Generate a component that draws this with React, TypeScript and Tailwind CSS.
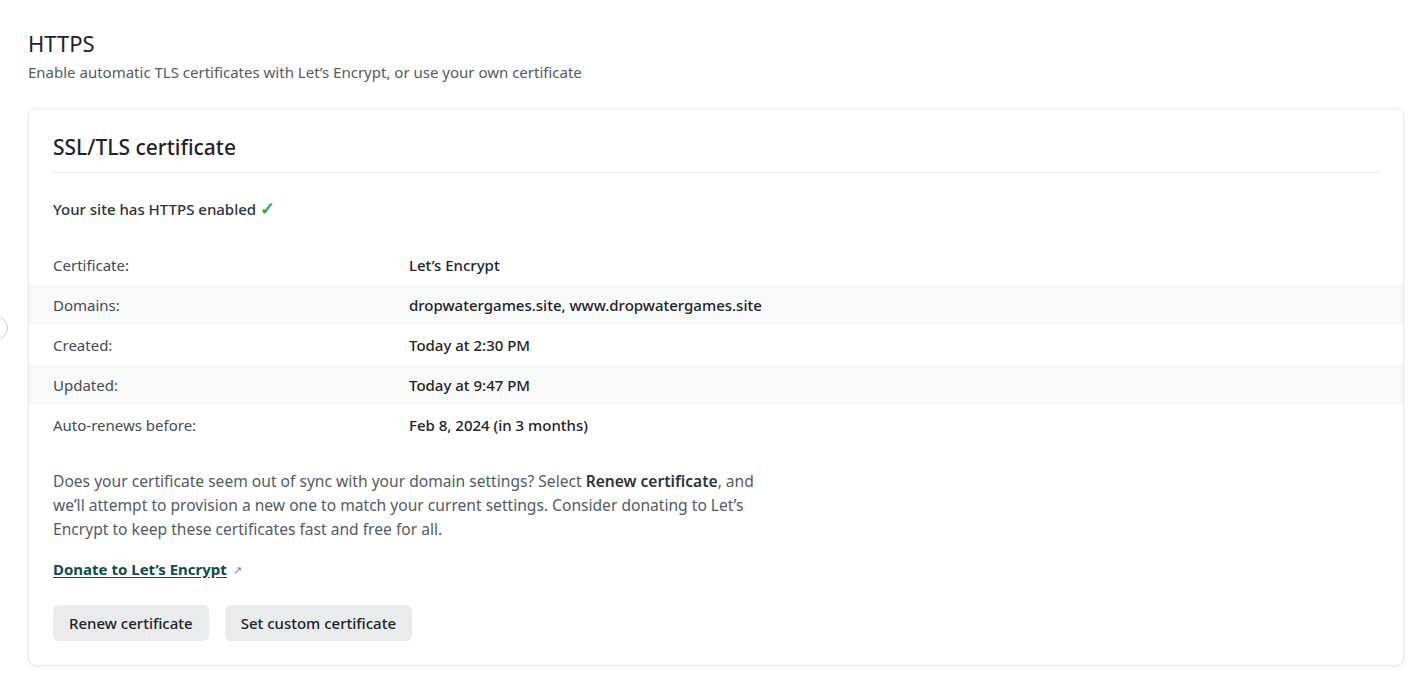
import { ReactNode } from "react";

const rows: { label: string; value: string }[] = [
  { label: "Certificate:", value: "Let’s Encrypt" },
  { label: "Domains:", value: "dropwatergames.site, www.dropwatergames.site" },
  { label: "Created:", value: "Today at 2:30 PM" },
  { label: "Updated:", value: "Today at 9:47 PM" },
  { label: "Auto-renews before:", value: "Feb 8, 2024 (in 3 months)" },
];

const Button = ({ children }: { children: ReactNode }) => (
  <button className="h-9 px-4 rounded-md bg-[#e9ebed] text-[15px] font-medium text-[#1f2328] hover:bg-[#dfe2e5]">
    {children}
  </button>
);

const App = () => {
  return (
    <div
      className="relative min-h-screen bg-white pl-[28px] pr-[14px] pt-[29px] text-[#2e3338]"
      style={{ fontFamily: '"Noto Sans", "Open Sans", sans-serif' }}
    >
      {/* collapsed sidebar toggle peeking from the left */}
      <div className="absolute left-[-16px] top-[316px] w-6 h-6 rounded-full border border-[#c9ccd0] bg-white" />

      <h1 className="text-[22px] leading-7 text-[#1f2328]">HTTPS</h1>
      <p className="mt-[5px] text-[15px] leading-5 text-[#545a61]">
        Enable automatic TLS certificates with Let’s Encrypt, or use your own certificate
      </p>

      <div className="mt-[26px] rounded-lg border border-[#e7e9eb] bg-white shadow-[0_1px_4px_rgba(0,0,0,0.06)]">
        <div className="px-6 pt-6">
          <h2 className="pb-[11px] border-b border-[#e4e6e8] text-[21px] leading-7 font-medium text-[#1f2328]">
            SSL/TLS certificate
          </h2>
          <p className="mt-6 text-[15px] leading-6 font-medium text-[#2e3338]">
            Your site has HTTPS enabled <span className="text-[18px] font-bold leading-none text-[#30a46c]">✓</span>
          </p>
        </div>

        <div className="mt-6">
          {rows.map((r, i) => (
            <div
              key={r.label}
              className={`flex items-center h-10 px-6 text-[15px] ${i % 2 === 1 ? "bg-[#f8f9f9]" : ""}`}
            >
              <div className="w-[356px] text-[#454b52]">{r.label}</div>
              <div className="font-medium text-[#1f2328]">{r.value}</div>
            </div>
          ))}
        </div>

        <div className="px-6 pt-6 pb-6">
          <p className="max-w-[712px] text-[15.6px] leading-6 text-[#545a61]">
            Does your certificate seem out of sync with your domain settings? Select{" "}
            <strong className="font-semibold text-[#2e3338]">Renew certificate</strong>, and we’ll attempt to
            provision a new one to match your current settings. Consider donating to Let’s Encrypt to keep these
            certificates fast and free for all.
          </p>
          <div className="mt-4 h-6 flex items-center">
            <a href="#" className="text-[15px] leading-6 font-bold text-[#0a4d4a] underline underline-offset-2">
              Donate to Let’s Encrypt
            </a>
            <span className="ml-1.5 text-[11px] leading-none text-[#7a8087]">↗</span>
          </div>
          <div className="mt-6 flex gap-4">
            <Button>Renew certificate</Button>
            <Button>Set custom certificate</Button>
          </div>
        </div>
      </div>
    </div>
  );
};

export default App;
